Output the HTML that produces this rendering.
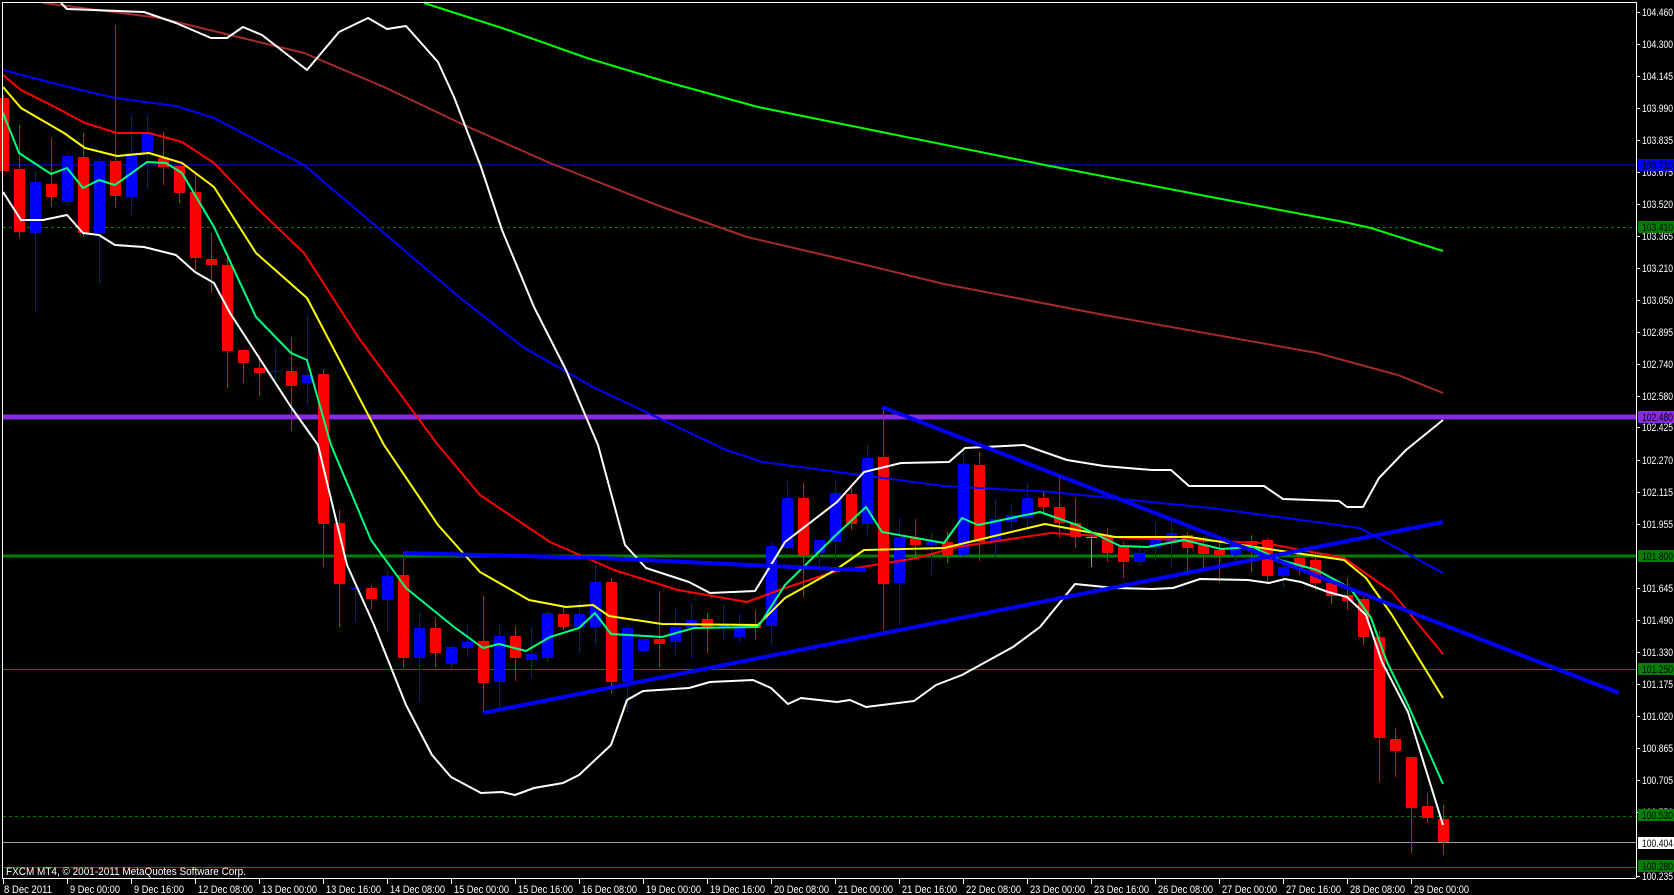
<!DOCTYPE html>
<html><head><meta charset="utf-8"><style>
html,body{margin:0;padding:0;background:#000;overflow:hidden}
svg{display:block}
text{font-family:"Liberation Sans",sans-serif;font-size:11px}
</style></head><body>
<svg id="s" width="1674" height="895" xmlns="http://www.w3.org/2000/svg">
<rect width="1674" height="895" fill="#000"/>
<line x1="3" y1="165" x2="1636" y2="165" stroke="#0000ff" stroke-width="1"/>
<line x1="3" y1="227.5" x2="1636" y2="227.5" stroke="#008000" stroke-width="1" stroke-dasharray="3,3"/>
<line x1="3" y1="417" x2="1636" y2="417" stroke="#8a2be2" stroke-width="5"/>
<line x1="3" y1="556" x2="1636" y2="556" stroke="#008000" stroke-width="3"/>
<line x1="3" y1="669.5" x2="1636" y2="669.5" stroke="#008000" stroke-width="1"/>
<line x1="3" y1="816.5" x2="1636" y2="816.5" stroke="#008000" stroke-width="1" stroke-dasharray="3,3"/>
<line x1="3" y1="842.5" x2="1636" y2="842.5" stroke="#a0a0a8" stroke-width="1"/>
<line x1="3" y1="867.5" x2="1636" y2="867.5" stroke="#008000" stroke-width="1"/>
<g id="cand"></g>
<g fill="none" stroke-linejoin="round">
<polyline stroke="#00ff00" stroke-width="2" points="424,3 502,28 587,58 667,82 758,107 837,123 1045,165 1211,197 1344,222 1371,228 1443,251"/>
<polyline stroke="#a52a2a" stroke-width="2" points="43,3 160,18 304,53 384,87 464,125 550,163 662,207 747,237 837,258 944,284 1104,315 1317,353 1350,362 1398,375 1443,393"/>
<polyline stroke="#0000ff" stroke-width="2" points="3,70 64,86 115,98 176,106 214,118 304,165 384,233 459,297 523,347 593,387 726,450 763,462 837,472 944,486 1051,492 1211,508 1360,528 1443,573"/>
<polyline stroke="#ff0000" stroke-width="2" points="3,75 21,90 53,106 85,123 117,133 149,133 182,142 214,163 256,207 304,253 358,337 438,445 480,495 550,542 614,570 678,590 747,602 785,588 837,571 917,558 957,547 1051,533 1131,538 1264,543 1344,558 1392,592 1443,654"/>
<polyline stroke="#ffff00" stroke-width="2" points="3,87 21,108 64,133 85,148 117,156 149,153 182,163 214,187 256,253 307,298 384,445 438,525 480,572 529,600 566,607 593,605 609,616 662,624 758,625 785,598 837,569 864,550 944,548 1045,524 1115,537 1189,537 1275,550 1344,560 1366,578 1392,615 1443,698"/>
<polyline stroke="#00ff7f" stroke-width="2" points="3,113 19,153 51,174 67,168 83,188 99,180 115,185 147,162 166,163 182,173 214,227 256,317 291,353 307,360 331,445 371,540 406,588 454,627 483,648 499,644 526,651 550,637 579,628 595,613 611,634 662,637 694,628 758,627 785,585 837,534 866,507 882,532 944,543 962,518 978,525 1040,512 1077,525 1120,546 1147,547 1184,540 1221,549 1253,547 1280,560 1317,570 1350,588 1371,618 1387,662 1408,705 1443,784"/>
<polyline stroke="#ffffff" stroke-width="2" points="61,3 67,9 144,12 176,23 211,38 227,38 243,27 262,35 307,70 339,32 368,18 387,29 406,26 438,62 454,97 481,167 502,230 534,307 566,370 598,445 625,545 646,568 689,582 710,593 755,591 785,542 837,502 864,472 901,463 949,462 965,448 1024,445 1067,460 1104,466 1152,470 1171,470 1189,486 1264,486 1283,499 1339,501 1347,507 1363,507 1379,478 1406,450 1443,420"/>
<polyline stroke="#ffffff" stroke-width="2" points="3,192 21,220 43,220 67,215 83,233 99,235 115,245 144,247 176,255 195,272 214,283 230,313 256,353 291,407 318,445 347,565 374,625 406,705 432,755 451,777 481,793 502,792 515,795 534,788 563,783 579,775 611,745 627,700 643,691 689,688 710,682 753,680 771,688 788,704 801,698 837,702 850,700 866,707 914,701 936,685 962,675 1013,647 1040,627 1075,584 1115,588 1152,589 1173,588 1200,579 1248,580 1269,583 1285,579 1301,582 1328,592 1347,597 1366,615 1382,662 1408,712 1443,825"/>
<line x1="483" y1="713" x2="1443" y2="522" stroke="#0000ff" stroke-width="4"/>
<line x1="882" y1="407" x2="1619" y2="693" stroke="#0000ff" stroke-width="4"/>
<polyline stroke="#0000ff" stroke-width="4" points="403,553 600,558 837,569 866,570"/>
</g>
<g stroke="#ffffff" stroke-width="1" fill="none">
<line x1="2.5" y1="2" x2="2.5" y2="878"/>
<line x1="2" y1="2.5" x2="1636" y2="2.5"/>
<line x1="2" y1="878.5" x2="1636" y2="878.5"/>
<line x1="1636.5" y1="2" x2="1636.5" y2="878"/>
</g>
<text x="6" y="875" fill="#ffffff" textLength="240" lengthAdjust="spacingAndGlyphs">FXCM MT4, © 2001-2011 MetaQuotes Software Corp.</text>
<g id="axis"></g>
</svg>
<script>
var NS="http://www.w3.org/2000/svg";
function el(p,t,a,txt){var e=document.createElementNS(NS,t);for(var k in a)e.setAttribute(k,a[k]);if(txt)e.textContent=txt;p.appendChild(e);return e;}
var C=[
[98,171,95,171],[169,232,125,238],[233,182,172,312],[184,197,138,207],[202,156,153,205],[157,233,133,237],[233,161,158,283],[161,196,25,208],[197,153,115,215],[152,134,115,188],[158,167,132,185],[166,193,166,203],[192,258,172,270],[259,265,233,293],[265,351,253,388],[350,363,350,383],[368,373,355,396],[371,371,347,380],[371,386,337,431],[383,375,315,405],
[374,524,369,567],[523,584,510,627],[588,588,585,622],[588,599,585,609],[600,576,571,632],[575,658,558,668],[658,628,613,702],[628,653,618,667],[664,647,645,668],[648,642,625,657],
[641,683,596,712],[682,636,624,707],[636,658,626,681],[660,654,628,678],[658,613,610,662],[614,627,607,630],[627,614,602,652],[627,582,562,645],[582,682,578,693],[682,628,625,712],
[651,639,638,652],[639,644,591,667],[642,627,608,655],[628,620,604,658],[619,628,613,653],[628,625,605,640],[637,628,614,642],[625,628,610,640],[626,546,542,645],[548,498,481,550],
[498,555,483,597],[553,540,540,572],[542,493,480,560],[494,524,485,530],[524,458,445,535],[457,584,407,630],[583,537,518,625],[538,545,519,555],[545,542,533,575],[542,555,532,563],
[555,464,452,558],[465,542,452,561],[542,519,500,558],[522,515,505,530],[518,498,484,532],[498,507,492,512],[507,523,477,538],[523,537,498,548],[537,538,535,567],[537,553,528,562],
[547,562,542,578],[562,553,545,565],[548,540,522,561],[542,533,522,567],[535,548,532,571],[545,554,537,570],[550,555,542,582],[555,545,538,565],[541,545,535,572],[540,576,538,583],
[576,567,560,587],[558,568,552,575],[560,583,552,590],[583,596,578,604],[595,601,578,610],[599,637,597,645],[637,738,631,782],[739,751,728,777],[757,808,757,853],[806,818,793,823],[819,842,805,855]
];
var g=document.getElementById("cand");
for(var i=0;i<C.length;i++){
 var x=3+16*i,c=C[i],red=c[1]>c[0];
 var col=red?"#ff0000":"#0000ff"; if(i==68)col="#00ff00";
 el(g,"line",{x1:x+0.5,x2:x+0.5,y1:c[2],y2:c[3],stroke:col,"stroke-width":1});
 var t=Math.min(c[0],c[1]),h=Math.max(1,Math.abs(c[1]-c[0]));
 el(g,"rect",{x:x-5,y:t,width:11,height:h,fill:col});
}
var a=document.getElementById("axis");
var P=[["104.460",12],["104.300",44],["104.145",76],["103.990",108],["103.835",140],["103.675",172],["103.520",204],["103.365",236],["103.210",268],["103.050",300],["102.895",332],["102.740",364],["102.580",396],["102.425",427],["102.270",460],["102.115",492],["101.955",524],["101.645",588],["101.490",620],["101.330",652],["101.175",684],["101.020",716],["100.865",748],["100.705",780],["100.550",812],["100.235",876]];
P.forEach(function(p){el(a,"line",{x1:1636,x2:1640,y1:p[1]+0.5,y2:p[1]+0.5,stroke:"#fff"});el(a,"text",{x:1642,y:p[1]+4,fill:"#fff",textLength:31,lengthAdjust:"spacingAndGlyphs"},p[0]);});
var H=[["103.710",165,"#0000ff","#000"],["103.410",227,"#008000","#000"],["102.480",417,"#8a2be2","#000"],["101.800",556,"#008000","#000"],["101.250",669,"#008000","#000"],["100.530",815,"#008000","#000"],["100.404",843,"#ffffff","#000"],["100.280",866,"#008000","#000"]];
H.forEach(function(p){el(a,"rect",{x:1638,y:p[1]-6,width:36,height:12,fill:p[2]});el(a,"text",{x:1642,y:p[1]+4,fill:p[3],textLength:31,lengthAdjust:"spacingAndGlyphs"},p[0]);});
var D=["8 Dec 2011","9 Dec 00:00","9 Dec 16:00","12 Dec 08:00","13 Dec 00:00","13 Dec 16:00","14 Dec 08:00","15 Dec 00:00","15 Dec 16:00","16 Dec 08:00","19 Dec 00:00","19 Dec 16:00","20 Dec 08:00","21 Dec 00:00","21 Dec 16:00","22 Dec 08:00","23 Dec 00:00","23 Dec 16:00","26 Dec 08:00","27 Dec 00:00","27 Dec 16:00","28 Dec 08:00","29 Dec 00:00"];
D.forEach(function(d,k){var x=3+64*k;el(a,"line",{x1:x+0.5,x2:x+0.5,y1:878,y2:884,stroke:"#fff"});var L=d.length>=12?55:(k==0?48:50);el(a,"text",{x:x+(k?3:1),y:893,fill:"#fff",textLength:L,lengthAdjust:"spacingAndGlyphs"},d);});
</script>
</body></html>
